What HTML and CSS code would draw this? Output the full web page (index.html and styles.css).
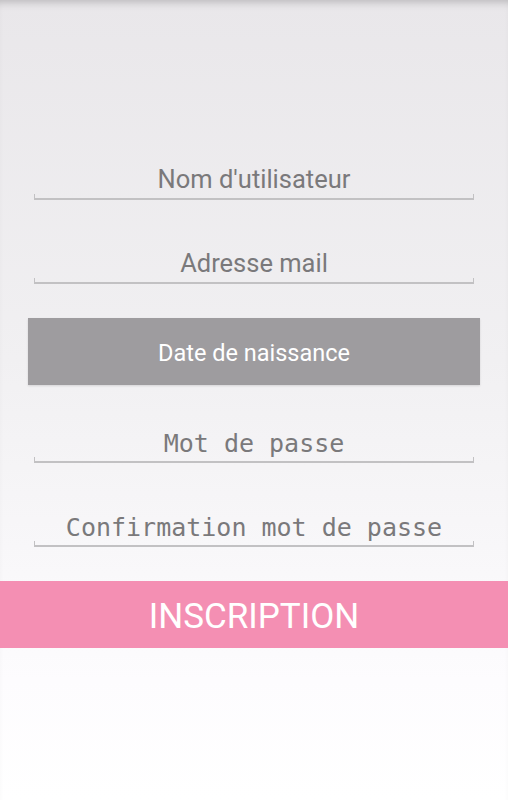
FILE: index.html
```html
<!doctype html>
<html lang="fr">
<head>
    <meta charset="utf-8">
    <meta name="viewport" content="width=device-width, initial-scale=1">
    <title>Inscription</title>
    <link rel="stylesheet" href="styles.css">
</head>
<body>
    <div class="screen">
        <form class="signup">
            <div class="field">Nom d'utilisateur</div>
            <div class="field">Adresse mail</div>
            <div class="date-button">Date de naissance</div>
            <div class="field field-mono field-pass">Mot de passe</div>
            <div class="field field-mono">Confirmation mot de passe</div>
        </form>
        <div class="submit">INSCRIPTION</div>
    </div>
</body>
</html>
```

FILE: styles.css
```css
html, body {
    margin: 0;
    height: 100%;
}

body {
    font-family: 'Roboto', 'Noto Sans', sans-serif;
    background: linear-gradient(to bottom, #e9e7ea 0%, #f1f0f2 45%, #fdfcfe 85%, #ffffff 100%);
}

.screen {
    min-height: 100vh;
    box-shadow: inset 0 8px 8px -6px rgba(0, 0, 0, 0.22);
    padding-top: 150px;
    box-sizing: border-box;
}

.signup {
    display: flex;
    flex-direction: column;
    padding: 0 28px;
}

.field {
    position: relative;
    height: 50px;
    margin: 0 6px 34px;
    box-sizing: border-box;
    padding-top: 14px;
    text-align: center;
    color: #7a797b;
    font-size: 25.5px;
    line-height: 30px;
}

/* android-style underline with small end ticks */
.field::after {
    content: '';
    position: absolute;
    left: 0;
    right: 0;
    bottom: 0;
    height: 4px;
    border: 1px solid #c2c1c3;
    border-top: none;
    border-bottom-width: 2px;
}

.field-mono {
    font-family: 'DejaVu Sans Mono', 'Liberation Mono', monospace;
    font-size: 25px;
    padding-top: 16px;
}

.field-pass {
    margin-top: -6px;
}

.date-button {
    height: 67px;
    margin-bottom: 34px;
    display: flex;
    align-items: center;
    justify-content: center;
    background: #9e9c9f;
    color: #ffffff;
    font-size: 23.5px;
    padding-top: 2px;
    box-sizing: border-box;
    box-shadow: 0 1px 2px rgba(0, 0, 0, 0.12);
}

.submit {
    height: 67px;
    display: flex;
    align-items: center;
    justify-content: center;
    background: #f48fb3;
    color: #ffffff;
    font-size: 35px;
    padding-top: 4px;
    box-sizing: border-box;
}
```
